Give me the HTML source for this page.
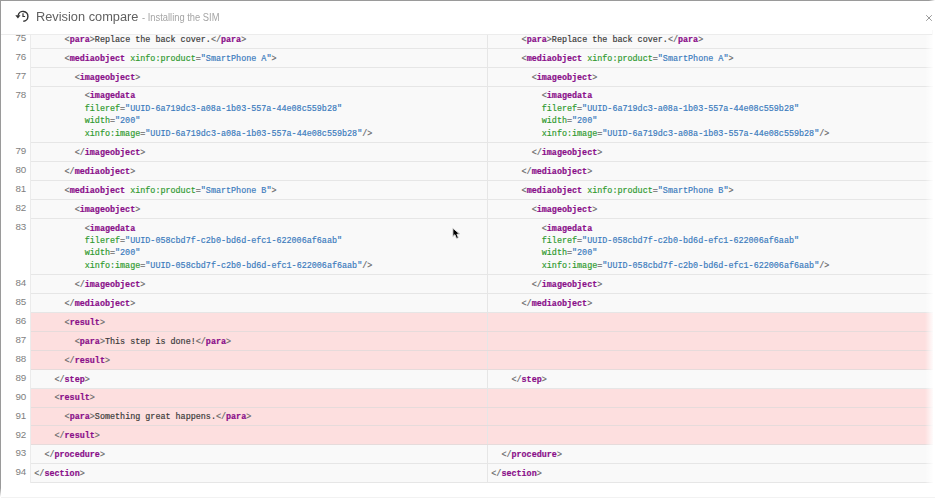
<!DOCTYPE html>
<html><head><meta charset="utf-8">
<style>
html,body{margin:0;padding:0;background:#fff;}
body{width:936px;height:499px;overflow:hidden;position:relative;font-family:"Liberation Sans",sans-serif;}
#frame{position:absolute;left:0;top:0;width:936px;height:499px;}
#bl{position:absolute;z-index:7;left:0;top:0;width:1px;height:497px;background:linear-gradient(#9a9a9a 0,#9a9a9a 488px,rgba(154,154,154,0) 497px);}
#bt{position:absolute;z-index:7;left:0;top:0;width:935px;height:1px;background:linear-gradient(to right,#9a9a9a 0,#9a9a9a 929px,rgba(154,154,154,0) 935px);}
#hdr{position:absolute;z-index:5;left:1px;top:1px;width:931px;height:33px;background:#fff;}
#hline{position:absolute;z-index:6;left:1px;top:34px;width:931px;height:1px;background:#ececec;}
#title{position:absolute;z-index:6;left:36px;top:8.8px;font-size:13.7px;color:#616161;transform:scaleX(0.935);transform-origin:0 0;white-space:nowrap;letter-spacing:0;}
#title span{font-size:10px;color:#a5a5a5;}
#close{position:absolute;left:925px;top:13px;}
#icon{position:absolute;left:14px;top:9px;}
.row{position:absolute;left:30px;width:903px;box-sizing:border-box;border-bottom:1px solid #e6e6e6;background:#f9f9f9;}
.row.del{background:#fddfdf;border-bottom-color:#e6dbdb;}
.ln{position:absolute;left:-30px;top:2.2px;width:26.3px;text-align:right;font-size:9.8px;color:#7e7e7e;}
.c{position:absolute;top:3.7px;-webkit-text-stroke:0.18px currentColor;font-family:"Liberation Mono",monospace;font-size:8.41px;line-height:12.43px;color:#3a3a3a;white-space:pre;}
.cl{left:4.3px;}
.cr{left:461.3px;}
.div{position:absolute;left:457px;top:0;bottom:0;width:1px;background:#e6e6e6;}
.t{color:#8a0f8a;font-weight:bold;}
.p{color:#6a6a6a;}
.a{color:#2f9a2f;}
.v{color:#3b7bbd;}
</style></head><body>
<div id="frame">
<div id="hdr">
</div>
<div id="title">Revision compare <span>- Installing the SIM</span></div>
<div id="rows">
<div class="row" style="top:30.11px;height:18.89px"><div class="ln">75</div><div class="c cl">      <span class="p">&lt;</span><b class="t">para</b><span class="p">&gt;</span>Replace the back cover.<span class="p">&lt;/</span><b class="t">para</b><span class="p">&gt;</span></div><div class="c cr">      <span class="p">&lt;</span><b class="t">para</b><span class="p">&gt;</span>Replace the back cover.<span class="p">&lt;/</span><b class="t">para</b><span class="p">&gt;</span></div><div class="div"></div></div>
<div class="row" style="top:49.00px;height:18.89px"><div class="ln">76</div><div class="c cl">      <span class="p">&lt;</span><b class="t">mediaobject</b> <span class="a">xinfo:product</span><span class="p">=</span><span class="v">&quot;SmartPhone A&quot;</span><span class="p">&gt;</span></div><div class="c cr">      <span class="p">&lt;</span><b class="t">mediaobject</b> <span class="a">xinfo:product</span><span class="p">=</span><span class="v">&quot;SmartPhone A&quot;</span><span class="p">&gt;</span></div><div class="div"></div></div>
<div class="row" style="top:67.89px;height:18.89px"><div class="ln">77</div><div class="c cl">        <span class="p">&lt;</span><b class="t">imageobject</b><span class="p">&gt;</span></div><div class="c cr">        <span class="p">&lt;</span><b class="t">imageobject</b><span class="p">&gt;</span></div><div class="div"></div></div>
<div class="row" style="top:86.78px;height:56.48px"><div class="ln">78</div><div class="c cl">          <span class="p">&lt;</span><b class="t">imagedata</b>
          <span class="a">fileref</span><span class="p">=</span><span class="v">&quot;UUID-6a719dc3-a08a-1b03-557a-44e08c559b28&quot;</span>
          <span class="a">width</span><span class="p">=</span><span class="v">&quot;200&quot;</span>
          <span class="a">xinfo:image</span><span class="p">=</span><span class="v">&quot;UUID-6a719dc3-a08a-1b03-557a-44e08c559b28&quot;</span><span class="p">/&gt;</span></div><div class="c cr">          <span class="p">&lt;</span><b class="t">imagedata</b>
          <span class="a">fileref</span><span class="p">=</span><span class="v">&quot;UUID-6a719dc3-a08a-1b03-557a-44e08c559b28&quot;</span>
          <span class="a">width</span><span class="p">=</span><span class="v">&quot;200&quot;</span>
          <span class="a">xinfo:image</span><span class="p">=</span><span class="v">&quot;UUID-6a719dc3-a08a-1b03-557a-44e08c559b28&quot;</span><span class="p">/&gt;</span></div><div class="div"></div></div>
<div class="row" style="top:143.26px;height:18.89px"><div class="ln">79</div><div class="c cl">        <span class="p">&lt;/</span><b class="t">imageobject</b><span class="p">&gt;</span></div><div class="c cr">        <span class="p">&lt;/</span><b class="t">imageobject</b><span class="p">&gt;</span></div><div class="div"></div></div>
<div class="row" style="top:162.15px;height:18.89px"><div class="ln">80</div><div class="c cl">      <span class="p">&lt;/</span><b class="t">mediaobject</b><span class="p">&gt;</span></div><div class="c cr">      <span class="p">&lt;/</span><b class="t">mediaobject</b><span class="p">&gt;</span></div><div class="div"></div></div>
<div class="row" style="top:181.04px;height:18.89px"><div class="ln">81</div><div class="c cl">      <span class="p">&lt;</span><b class="t">mediaobject</b> <span class="a">xinfo:product</span><span class="p">=</span><span class="v">&quot;SmartPhone B&quot;</span><span class="p">&gt;</span></div><div class="c cr">      <span class="p">&lt;</span><b class="t">mediaobject</b> <span class="a">xinfo:product</span><span class="p">=</span><span class="v">&quot;SmartPhone B&quot;</span><span class="p">&gt;</span></div><div class="div"></div></div>
<div class="row" style="top:199.93px;height:18.89px"><div class="ln">82</div><div class="c cl">        <span class="p">&lt;</span><b class="t">imageobject</b><span class="p">&gt;</span></div><div class="c cr">        <span class="p">&lt;</span><b class="t">imageobject</b><span class="p">&gt;</span></div><div class="div"></div></div>
<div class="row" style="top:218.82px;height:56.48px"><div class="ln">83</div><div class="c cl">          <span class="p">&lt;</span><b class="t">imagedata</b>
          <span class="a">fileref</span><span class="p">=</span><span class="v">&quot;UUID-058cbd7f-c2b0-bd6d-efc1-622006af6aab&quot;</span>
          <span class="a">width</span><span class="p">=</span><span class="v">&quot;200&quot;</span>
          <span class="a">xinfo:image</span><span class="p">=</span><span class="v">&quot;UUID-058cbd7f-c2b0-bd6d-efc1-622006af6aab&quot;</span><span class="p">/&gt;</span></div><div class="c cr">          <span class="p">&lt;</span><b class="t">imagedata</b>
          <span class="a">fileref</span><span class="p">=</span><span class="v">&quot;UUID-058cbd7f-c2b0-bd6d-efc1-622006af6aab&quot;</span>
          <span class="a">width</span><span class="p">=</span><span class="v">&quot;200&quot;</span>
          <span class="a">xinfo:image</span><span class="p">=</span><span class="v">&quot;UUID-058cbd7f-c2b0-bd6d-efc1-622006af6aab&quot;</span><span class="p">/&gt;</span></div><div class="div"></div></div>
<div class="row" style="top:275.30px;height:18.89px"><div class="ln">84</div><div class="c cl">        <span class="p">&lt;/</span><b class="t">imageobject</b><span class="p">&gt;</span></div><div class="c cr">        <span class="p">&lt;/</span><b class="t">imageobject</b><span class="p">&gt;</span></div><div class="div"></div></div>
<div class="row" style="top:294.19px;height:18.89px"><div class="ln">85</div><div class="c cl">      <span class="p">&lt;/</span><b class="t">mediaobject</b><span class="p">&gt;</span></div><div class="c cr">      <span class="p">&lt;/</span><b class="t">mediaobject</b><span class="p">&gt;</span></div><div class="div"></div></div>
<div class="row del" style="top:313.08px;height:18.89px"><div class="ln">86</div><div class="c cl">      <span class="p">&lt;</span><b class="t">result</b><span class="p">&gt;</span></div><div class="div"></div></div>
<div class="row del" style="top:331.97px;height:18.89px"><div class="ln">87</div><div class="c cl">        <span class="p">&lt;</span><b class="t">para</b><span class="p">&gt;</span>This step is done!<span class="p">&lt;/</span><b class="t">para</b><span class="p">&gt;</span></div><div class="div"></div></div>
<div class="row del" style="top:350.86px;height:18.89px"><div class="ln">88</div><div class="c cl">      <span class="p">&lt;/</span><b class="t">result</b><span class="p">&gt;</span></div><div class="div"></div></div>
<div class="row" style="top:369.75px;height:18.89px"><div class="ln">89</div><div class="c cl" style="top:4.7px">    <span class="p">&lt;/</span><b class="t">step</b><span class="p">&gt;</span></div><div class="c cr" style="top:4.7px">    <span class="p">&lt;/</span><b class="t">step</b><span class="p">&gt;</span></div><div class="div"></div></div>
<div class="row del" style="top:388.64px;height:18.89px"><div class="ln">90</div><div class="c cl">    <span class="p">&lt;</span><b class="t">result</b><span class="p">&gt;</span></div><div class="div"></div></div>
<div class="row del" style="top:407.53px;height:18.89px"><div class="ln">91</div><div class="c cl">      <span class="p">&lt;</span><b class="t">para</b><span class="p">&gt;</span>Something great happens.<span class="p">&lt;/</span><b class="t">para</b><span class="p">&gt;</span></div><div class="div"></div></div>
<div class="row del" style="top:426.42px;height:18.89px"><div class="ln">92</div><div class="c cl">    <span class="p">&lt;/</span><b class="t">result</b><span class="p">&gt;</span></div><div class="div"></div></div>
<div class="row" style="top:445.31px;height:18.89px"><div class="ln">93</div><div class="c cl">  <span class="p">&lt;/</span><b class="t">procedure</b><span class="p">&gt;</span></div><div class="c cr">  <span class="p">&lt;/</span><b class="t">procedure</b><span class="p">&gt;</span></div><div class="div"></div></div>
<div class="row" style="top:464.20px;height:18.89px"><div class="ln">94</div><div class="c cl"><span class="p">&lt;/</span><b class="t">section</b><span class="p">&gt;</span></div><div class="c cr"><span class="p">&lt;/</span><b class="t">section</b><span class="p">&gt;</span></div><div class="div"></div></div>
</div>
<div id="hline"></div>
<svg id="icon" width="20" height="18" viewBox="0 0 20 18" style="position:absolute;left:12px;top:7px;z-index:8">
<path d="M11.3 14.2 A4.9 4.9 0 1 0 6.2 8.4" fill="none" stroke="#333" stroke-width="1.4"/>
<polygon points="3.3,8.2 8.5,8.2 5.9,11.6" fill="#333"/>
<path d="M11.0 6.2 V9.5 H13.1" fill="none" stroke="#333" stroke-width="1.2"/>
</svg>
<svg id="close" width="10" height="10" viewBox="0 0 10 10" style="position:absolute;left:924px;top:13px;z-index:8">
<path d="M2.2 2.2 L7.8 7.8 M7.8 2.2 L2.2 7.8" stroke="#9a9a9a" stroke-width="1"/>
</svg>
<div id="vl" style="position:absolute;left:30px;top:35px;width:1px;height:448px;background:#ebebeb;z-index:2"></div>
<svg id="cursor" width="14" height="14" viewBox="0 0 14 14" style="position:absolute;left:451px;top:227px;z-index:9;filter:drop-shadow(0 0.6px 0.7px rgba(0,0,0,0.3))">
<path d="M1.9 1.2 L1.9 9.5 L3.9 7.7 L5.5 11.5 L7.4 10.7 L5.9 7.2 L8.7 7.1 Z" fill="#000" stroke="#fff" stroke-width="0.8" stroke-linejoin="round"/>
</svg>
<div id="rfade" style="position:absolute;left:925px;top:35px;width:9px;height:449px;background:linear-gradient(to right,rgba(255,255,255,0),#fff);z-index:3"></div>
<div id="bb" style="position:absolute;left:1px;top:497px;width:934px;height:1px;background:#f2f2f2;z-index:3"></div>
<div id="bl"></div><div id="bt"></div>
</div>
</body></html>
